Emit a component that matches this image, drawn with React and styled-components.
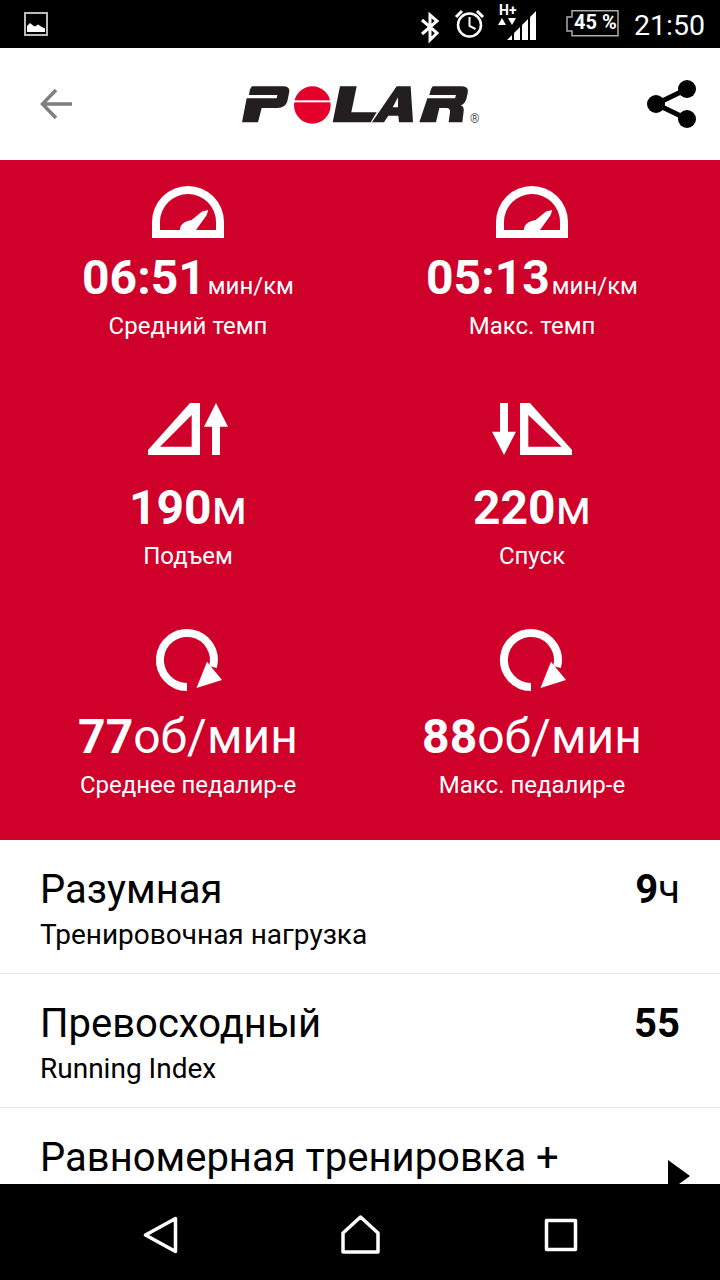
import React from "react";
import styled, { createGlobalStyle } from "styled-components";

const GlobalStyle = createGlobalStyle`
  html, body {
    margin: 0;
    padding: 0;
    background: #000;
  }
  * {
    box-sizing: border-box;
  }
`;

const Phone = styled.div`
  width: 720px;
  height: 1280px;
  display: flex;
  flex-direction: column;
  overflow: hidden;
  background: #fff;
  font-family: Roboto, "Noto Sans", sans-serif;
`;

const StatusBar = styled.div`
  height: 48px;
  flex: none;
  display: flex;
  align-items: flex-start;
  background: #000;
  color: #fff;
`;
const StatusLeft = styled.svg`
  width: 24px;
  height: 24px;
  margin: 12px 0 0 24px;
`;
const StatusRight = styled.div`
  margin-left: auto;
  display: flex;
  align-items: flex-start;
`;
const StatusGlyphs = styled.svg`
  width: 200px;
  height: 48px;
  display: block;
`;
const BatteryText = styled.span`
  position: absolute;
  left: 574px;
  top: 9px;
  font-size: 20px;
  line-height: 27px;
  font-weight: 700;
  white-space: nowrap;
`;
const HPlus = styled.span`
  position: absolute;
  left: 499px;
  top: 4px;
  font-size: 14px;
  line-height: 13px;
  font-weight: 700;
`;
const Clock = styled.span`
  font-size: 28.5px;
  line-height: 48px;
  margin: 2px 16px 0 14px;
  width: 70px;
  white-space: nowrap;
`;

const Header = styled.header`
  height: 112px;
  flex: none;
  display: flex;
  align-items: center;
  justify-content: space-between;
  padding: 0 23px 0 40px;
`;
const BackIcon = styled.svg`
  width: 32px;
  height: 32px;
`;
const Logo = styled.svg`
  width: 240px;
  height: 42px;
  margin-top: 2px;
`;
const ShareIcon = styled.svg`
  width: 50px;
  height: 50px;
`;

const Stats = styled.section`
  height: 680px;
  flex: none;
  display: grid;
  grid-template-columns: 344px 344px;
  grid-auto-rows: 229.5px;
  padding: 0 16px;
  overflow: hidden;
  background: #cf0029;
  color: #fff;
`;
const Stat = styled.div`
  display: flex;
  flex-direction: column;
  align-items: center;
`;
const IconSlot = styled.div`
  height: 90px;
  padding-top: ${(p) => p.$top}px;
  display: flex;
  justify-content: center;
`;
const Value = styled.div`
  height: 56px;
  font-size: 48px;
  line-height: 56px;
  font-weight: 700;
  white-space: nowrap;
`;
const Unit = styled.span`
  font-weight: 400;
  font-size: ${(p) => (p.$small ? 24 : 48)}px;
  margin-left: ${(p) => (p.$small ? 2 : 0)}px;
`;
const Label = styled.div`
  margin-top: 5px;
  font-size: 24px;
  line-height: 30px;
  white-space: nowrap;
`;

const List = styled.div`
  flex: 1;
  min-height: 0;
  overflow: hidden;
`;
const Row = styled.div`
  height: 134px;
  padding: 28px 40px 0;
  display: flex;
  justify-content: space-between;
  border-bottom: 1px solid #e9e9e9;
  color: #000;
`;
const RowTitle = styled.div`
  font-size: 40px;
  line-height: 44px;
  white-space: nowrap;
`;
const RowSub = styled.div`
  margin-top: 6px;
  font-size: 28px;
  line-height: 34px;
  white-space: nowrap;
`;
const RowValue = styled.div`
  font-size: 40px;
  line-height: 44px;
  font-weight: 700;
`;
const RowUnit = styled.span`
  font-weight: 400;
`;
const Chevron = styled.svg`
  width: 22px;
  height: 32px;
  margin: 24px -10px 0 0;
`;

const NavBar = styled.nav`
  height: 96px;
  flex: none;
  background: #000;
`;
const NavIcons = styled.svg`
  width: 720px;
  height: 96px;
  display: block;
`;

const Gauge = () => (
  <svg width="72" height="52" viewBox="0 0 72 52">
    <path
      fill="#fff"
      fillRule="evenodd"
      d="M0 52V36a36 36 0 0 1 72 0v16zM8 44h56v-8a28 28 0 0 0-56 0z"
    />
    <path fill="#fff" d="M28 44c0-6 5-9 11.700-10L50 25.500 56.300 24l-1.600 5L44 44z" />
  </svg>
);

const Climb = () => (
  <svg width="80" height="52" viewBox="0 0 80 52">
    <path
      fill="#fff"
      fillRule="evenodd"
      d="M0 52v-5L42 0h10v52zM12 43.700h31.700V12z"
    />
    <path fill="#fff" d="M68 0l12 23.700h-8V52h-8V23.700h-8z" />
  </svg>
);

const Descent = () => (
  <svg width="80" height="52" viewBox="0 0 80 52">
    <path fill="#fff" d="M8 0h8v28.700h8L12 52 0 28.700h8z" />
    <path
      fill="#fff"
      fillRule="evenodd"
      d="M28 0h10l42 47v5H28zM36.300 12v31.700H69.700z"
    />
  </svg>
);

const Cadence = () => (
  <svg width="70" height="66" viewBox="-1 0 70 66">
    <path
      fill="none"
      stroke="#fff"
      strokeWidth="8"
      d="M33 60a27 27 0 1 1 26-20"
    />
    <path fill="#fff" d="M42.500 61L53 34.700 68 53z" />
  </svg>
);

const stats = [
  { icon: <Gauge />, top: 26, value: "06:51", unit: "мин/км", small: true, label: "Средний темп" },
  { icon: <Gauge />, top: 26, value: "05:13", unit: "мин/км", small: true, label: "Макс. темп" },
  { icon: <Climb />, top: 13.5, value: "190", unit: "м", label: "Подъем" },
  { icon: <Descent />, top: 13.5, value: "220", unit: "м", label: "Спуск" },
  { icon: <Cadence />, top: 8, value: "77", unit: "об/мин", label: "Среднее педалир-е" },
  { icon: <Cadence />, top: 8, value: "88", unit: "об/мин", label: "Макс. педалир-е" },
];

function App() {
  return (
    <Phone>
      <GlobalStyle />
      <StatusBar>
        <StatusLeft viewBox="0 0 24 24">
          <path fill="none" stroke="#bbb" strokeWidth="2" d="M1 1h22v22H1z" />
          <path fill="#fff" d="M3 20v-6l3-3 3 2.500 2 1 3-2 3 2 4 2v3.500z" />
        </StatusLeft>
        <StatusRight>
          <StatusGlyphs viewBox="420 0 200 48">
            <path
              fill="none"
              stroke="#fff"
              strokeWidth="3"
              d="M422 20l15 13-7 7V15l7 6-15 13"
            />
            <circle cx="469.500" cy="25" r="11.500" fill="none" stroke="#fff" strokeWidth="2.500" />
            <path fill="none" stroke="#fff" strokeWidth="2" d="M469.500 17v9l6 3" />
            <path fill="none" stroke="#fff" strokeWidth="3" d="M456 17l6-6M483 17l-6-6" />
            <path fill="#fff" d="M498 25l4-7 4 7zM508 18h8l-4 7z" />
            <path fill="#fff" d="M507 40l5-5v5zM514 40v-7l6-6v13zM522 40V25l6-6v21zM530 40V17l6-6v29z" />
            <path
              fill="none"
              stroke="#aaa"
              strokeWidth="1.500"
              d="M572 10.700h46v25h-46v-4.700h-5V17h5z"
            />
          </StatusGlyphs>
          <HPlus>H+</HPlus>
          <BatteryText>45 %</BatteryText>
          <Clock>21:50</Clock>
        </StatusRight>
      </StatusBar>

      <Header>
        <BackIcon viewBox="0 0 32 32">
          <path fill="none" stroke="#7f7f7f" strokeWidth="3.500" d="M32 16H3M16 2L2.500 16 16 30" />
        </BackIcon>
        <Logo viewBox="60 40 720 126">
          <path
            fill="#231f20"
            d="M98 47h92q22 0 17 21l-5 24q-5 20-30 20h-47l-11 43H66l14-72h90l2-10H87q3-26 11-26z"
          />
          <ellipse cx="277" cy="103" rx="55" ry="56" fill="#e4002b" />
          <rect x="218" y="89" width="118" height="6" fill="#fff" />
          <path fill="#231f20" d="M360 47h50l-16 78h76l-18 30H338z" />
          <path
            fill="#231f20"
            fillRule="evenodd"
            d="M530 47h42l7 108h-42l-2-20h-30l-13 20h-36zM534 80l-16 30h16z"
          />
          <path
            fill="#231f20"
            d="M640 47h85q23 0 18 21l-4 17q-4 15-17 19 11 4 9 18l-4 33h-41l4-30q1-13-10-13h-22l-10 43h-50l24-72h83l3-10h-80q6-26 12-26z"
          />
          <text x="750" y="157" fontSize="36" fontFamily="Roboto, sans-serif" fill="#555">®</text>
        </Logo>
        <ShareIcon viewBox="0 0 50 50">
          <path fill="none" stroke="#000" strokeWidth="5" d="M40 10L9 25l31 15" />
          <circle cx="9" cy="25" r="9" fill="#000" />
          <circle cx="40" cy="10" r="9" fill="#000" />
          <circle cx="40" cy="40" r="9" fill="#000" />
        </ShareIcon>
      </Header>

      <Stats>
        {stats.map((s) => (
          <Stat key={s.label}>
            <IconSlot $top={s.top}>{s.icon}</IconSlot>
            <Value>
              {s.value}
              <Unit $small={s.small}>{s.unit}</Unit>
            </Value>
            <Label>{s.label}</Label>
          </Stat>
        ))}
      </Stats>

      <List>
        <Row>
          <div>
            <RowTitle>Разумная</RowTitle>
            <RowSub>Тренировочная нагрузка</RowSub>
          </div>
          <RowValue>
            9<RowUnit>ч</RowUnit>
          </RowValue>
        </Row>
        <Row>
          <div>
            <RowTitle>Превосходный</RowTitle>
            <RowSub>Running Index</RowSub>
          </div>
          <RowValue>55</RowValue>
        </Row>
        <Row>
          <div>
            <RowTitle>Равномерная тренировка +</RowTitle>
          </div>
          <Chevron viewBox="0 0 22 32">
            <path fill="#000" d="M0 0l22 16L0 32z" />
          </Chevron>
        </Row>
      </List>

      <NavBar>
        <NavIcons viewBox="0 1184 720 96">
          <path
            fill="none"
            stroke="#fff"
            strokeWidth="3.500"
            strokeLinejoin="round"
            d="M145.500 1235l30-16.500v33zM343 1252v-19l17.500-16 17.500 16v19zM546.500 1220.500h29v29h-29z"
          />
        </NavIcons>
      </NavBar>
    </Phone>
  );
}

export default App;
